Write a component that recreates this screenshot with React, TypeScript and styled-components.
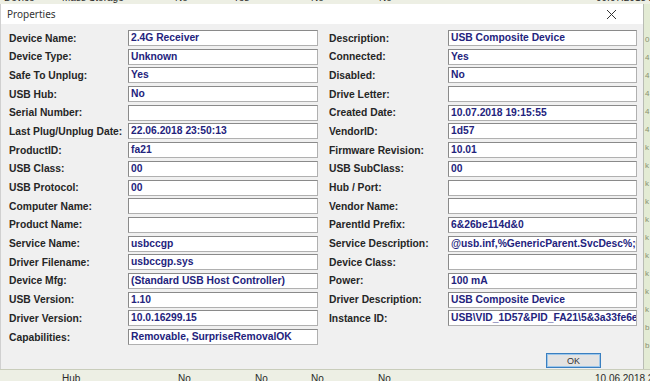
import React from "react";
import styled, { createGlobalStyle } from "styled-components";

const Global = createGlobalStyle`
  html, body { margin: 0; padding: 0; background: #eef0e6; }
  body { font-family: "Liberation Sans", Arial, sans-serif; }
`;

const Page = styled.div`
  width: 650px;
  height: 381px;
  overflow: hidden;
  display: flex;
  flex-direction: column;
  background: #eef0e6;
`;

const Strip = styled.div<{ $h: number; $top?: boolean }>`
  height: ${(p) => p.$h}px;
  flex: none;
  position: relative;
  overflow: hidden;
  background: #edefe4;
  border-top: ${(p) => (p.$top ? "1px solid #c9cdbb" : "none")};
`;

const StripText = styled.span<{ $x: number; $top: number }>`
  position: absolute;
  left: ${(p) => p.$x}px;
  top: ${(p) => p.$top}px;
  font-size: 10px;
  line-height: 12px;
  color: #2a2a2a;
  white-space: nowrap;
`;

const Middle = styled.div`
  display: flex;
  flex: 1;
  min-height: 0;
`;

const Dialog = styled.div`
  width: 644px;
  flex: none;
  display: flex;
  flex-direction: column;
  border-right: 1px solid #b9bcb4;
  border-left: 1px solid #d0d0d0;
  box-sizing: border-box;
  background: #f0f0f0;
`;

const TitleBar = styled.div`
  height: 20px;
  flex: none;
  background: #ffffff;
  display: flex;
  align-items: center;
  justify-content: space-between;
  padding: 0 26px 0 6px;
`;

const Title = styled.span`
  font-family: "Noto Sans", "Open Sans", sans-serif;
  font-size: 10px;
  color: #333;
`;

const Body = styled.div`
  flex: 1;
  padding: 6px 0 0 7px;
  display: flex;
  flex-direction: column;
`;

const Columns = styled.div`
  display: flex;
  gap: 10px;
  align-items: flex-start;
`;

const Column = styled.div`
  display: flex;
  flex-direction: column;
  gap: 2.7px;
`;

const Row = styled.div<{ $box: number }>`
  display: grid;
  grid-template-columns: 120px ${(p) => p.$box}px;
  height: 16px;
  align-items: center;
`;

const Label = styled.span`
  font-size: 10.3px;
  font-weight: bold;
  color: #262626;
  white-space: nowrap;
  padding-left: 1px;
`;

const Field = styled.div`
  height: 16px;
  box-sizing: border-box;
  background: #ffffff;
  border: 1px solid #8a8a8a;
  border-right-color: #b0b0b0;
  border-bottom-color: #b0b0b0;
  font-size: 10.3px;
  font-weight: bold;
  color: #23237d;
  line-height: 14px;
  padding-left: 2px;
  white-space: nowrap;
  overflow: hidden;
`;

const Footer = styled.div`
  display: flex;
  justify-content: flex-end;
  padding-right: 42px;
  margin-top: 8px;
`;

const OkButton = styled.button`
  width: 55px;
  height: 15px;
  box-sizing: border-box;
  border: 1px solid #3a7fc0;
  box-shadow: inset 0 0 0 1px #9cc6ea;
  background: #e3e3e3;
  font-family: "Liberation Sans", Arial, sans-serif;
  font-size: 9px;
  color: #333;
  padding: 0;
  line-height: 12px;
`;

const RightStrip = styled.div`
  flex: 1;
  background: #e3ebd4;
  display: flex;
  flex-direction: column;
  gap: 7px;
  padding-top: 30px;
  overflow: hidden;
`;

const EdgeChar = styled.span`
  font-size: 8px;
  color: #8a9070;
  line-height: 11px;
  margin-left: 1px;
`;

const left: [string, string][] = [
  ["Device Name:", "2.4G Receiver"],
  ["Device Type:", "Unknown"],
  ["Safe To Unplug:", "Yes"],
  ["USB Hub:", "No"],
  ["Serial Number:", ""],
  ["Last Plug/Unplug Date:", "22.06.2018 23:50:13"],
  ["ProductID:", "fa21"],
  ["USB Class:", "00"],
  ["USB Protocol:", "00"],
  ["Computer Name:", ""],
  ["Product Name:", ""],
  ["Service Name:", "usbccgp"],
  ["Driver Filename:", "usbccgp.sys"],
  ["Device Mfg:", "(Standard USB Host Controller)"],
  ["USB Version:", "1.10"],
  ["Driver Version:", "10.0.16299.15"],
  ["Capabilities:", "Removable, SurpriseRemovalOK"],
];

const right: [string, string][] = [
  ["Description:", "USB Composite Device"],
  ["Connected:", "Yes"],
  ["Disabled:", "No"],
  ["Drive Letter:", ""],
  ["Created Date:", "10.07.2018 19:15:55"],
  ["VendorID:", "1d57"],
  ["Firmware Revision:", "10.01"],
  ["USB SubClass:", "00"],
  ["Hub / Port:", ""],
  ["Vendor Name:", ""],
  ["ParentId Prefix:", "6&26be114d&0"],
  ["Service Description:", "@usb.inf,%GenericParent.SvcDesc%;Generic USB Parent"],
  ["Device Class:", ""],
  ["Power:", "100 mA"],
  ["Driver Description:", "USB Composite Device"],
  ["Instance ID:", "USB\\VID_1D57&PID_FA21\\5&3a33fe6e&0&2"],
];

const edge = ["0", "4", "4", "4", "4", "4", "k", "k", "k", "k", "k", "k", "k", "k", "k", "k", "b", "b"];

const CloseIcon = () => (
  <svg width="11" height="11" viewBox="0 0 11 11">
    <path d="M1 1 L10 10 M10 1 L1 10" stroke="#333" strokeWidth="1" fill="none" />
  </svg>
);

export default function App() {
  return (
    <Page>
      <Global />
      <Strip $h={4}>
        <StripText $x={4} $top={-8}>Device</StripText>
        <StripText $x={62} $top={-8}>Mass Storage</StripText>
        <StripText $x={175} $top={-8}>No</StripText>
        <StripText $x={233} $top={-8}>Yes</StripText>
        <StripText $x={311} $top={-8}>No</StripText>
        <StripText $x={379} $top={-8}>No</StripText>
        <StripText $x={596} $top={-8}>09.07.2018 20:41</StripText>
      </Strip>
      <Middle>
        <Dialog>
          <TitleBar>
            <Title>Properties</Title>
            <CloseIcon />
          </TitleBar>
          <Body>
            <Columns>
              <Column>
                {left.map(([l, v]) => (
                  <Row key={l} $box={190}>
                    <Label>{l}</Label>
                    <Field>{v}</Field>
                  </Row>
                ))}
              </Column>
              <Column>
                {right.map(([l, v]) => (
                  <Row key={l} $box={189}>
                    <Label>{l}</Label>
                    <Field>{v}</Field>
                  </Row>
                ))}
              </Column>
            </Columns>
            <Footer>
              <OkButton>OK</OkButton>
            </Footer>
          </Body>
        </Dialog>
        <RightStrip>
          {edge.map((c, i) => (
            <EdgeChar key={i}>{c}</EdgeChar>
          ))}
        </RightStrip>
      </Middle>
      <Strip $h={11} $top>
        <StripText $x={62} $top={3}>Hub</StripText>
        <StripText $x={178} $top={3}>No</StripText>
        <StripText $x={255} $top={3}>No</StripText>
        <StripText $x={311} $top={3}>No</StripText>
        <StripText $x={378} $top={3}>No</StripText>
        <StripText $x={595} $top={3}>10.06.2018 20:13</StripText>
      </Strip>
    </Page>
  );
}
